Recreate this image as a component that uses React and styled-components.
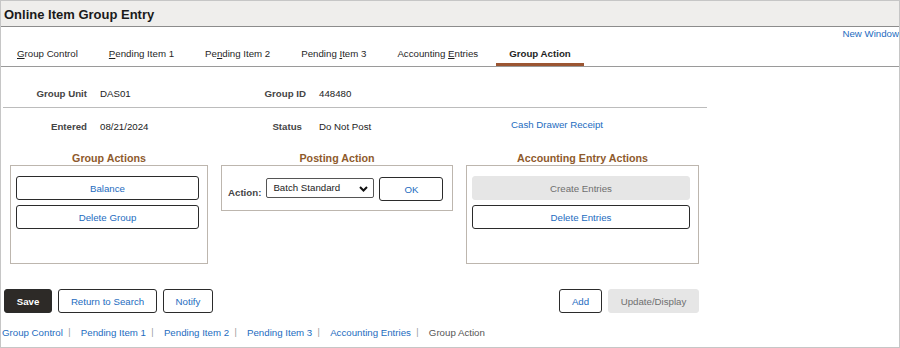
import React from 'react';
import styled, { createGlobalStyle } from 'styled-components';

const GlobalStyle = createGlobalStyle`
  html, body {
    margin: 0;
    padding: 0;
    background: #fff;
  }
  body {
    font-family: "Liberation Sans", Arial, sans-serif;
    font-size: 9.7px;
    color: #222;
  }
`;

const LINK = '#1d6cc0';
const BROWN = '#8e5a2c';
const FS = '9.7px';

const Page = styled.div`
  width: 900px;
  height: 348px;
  box-sizing: border-box;
  border: 1px solid #c6c6c6;
  overflow: hidden;
  display: flex;
  flex-direction: column;
`;

const Header = styled.div`
  height: 25px;
  background: #efeeec;
  border-bottom: 1px solid #8c8c8c;
  display: flex;
  align-items: center;
  padding-left: 3px;
`;

const Title = styled.h1`
  margin: 0;
  font-size: 13px;
  font-weight: bold;
  color: #1a1a1a;
  padding-top: 1px;
`;

const TopLinkRow = styled.div`
  height: 13px;
  display: flex;
  justify-content: flex-end;
  align-items: center;
`;

const Link = styled.a`
  color: ${LINK};
  font-size: ${FS};
  text-decoration: none;
  cursor: pointer;
  white-space: nowrap;
`;

const TabBar = styled.div`
  height: 26px;
  display: flex;
  gap: 5px;
  padding-left: 3px;
  border-bottom: 1px solid #9a9a9a;
`;

const Tab = styled.div`
  height: 26px;
  box-sizing: border-box;
  display: flex;
  align-items: center;
  padding: 3px 13px 0;
  border-bottom: 3px solid ${({ $active }) => ($active ? '#9b5532' : 'transparent')};
  font-size: ${FS};
  font-weight: ${({ $active }) => ($active ? 'bold' : 'normal')};
  color: #1f1f1f;
  white-space: pre;

  u {
    text-decoration: underline;
    text-underline-offset: 1px;
  }
`;

const FieldSection = styled.div`
  width: 704px;
  margin-left: 2px;
`;

const FieldRow = styled.div`
  display: flex;
  align-items: center;
  height: ${({ $h }) => $h}px;
  margin-top: ${({ $mt }) => $mt || 0}px;
  border-bottom: ${({ $divider }) => ($divider ? '1px solid #bcbcbc' : 'none')};
  padding-bottom: ${({ $divider }) => ($divider ? 4 : 0)}px;
`;

const Label = styled.div`
  width: ${({ $w }) => $w}px;
  text-align: right;
  font-weight: bold;
  color: #454545;
  padding-right: ${({ $pr }) => $pr || 0}px;
  box-sizing: border-box;
`;

const Value = styled.div`
  width: ${({ $w }) => $w}px;
  padding-left: 13px;
  box-sizing: border-box;
  color: #222;
`;

const ActionLink = styled(Link)`
  margin-bottom: 4px;
`;

const Panels = styled.div`
  display: flex;
  gap: 13px;
  padding-left: 9px;
  margin-top: 7px;
  align-items: flex-start;
`;

const Panel = styled.div`
  width: ${({ $w }) => $w}px;
  display: flex;
  flex-direction: column;
`;

const PanelTitle = styled.div`
  height: 14px;
  line-height: 14px;
  text-align: center;
  font-size: 10.7px;
  font-weight: bold;
  color: ${BROWN};
`;

const PanelBox = styled.div`
  border: 1px solid #bdb6ae;
  height: ${({ $h }) => $h}px;
  box-sizing: border-box;
  padding: 10px 8px 0 5px;
  display: flex;
  flex-direction: column;
  gap: 5px;
`;

const PostingBox = styled.div`
  border: 1px solid #bdb6ae;
  height: 46px;
  box-sizing: border-box;
  padding: 0 8px 0 6px;
  display: flex;
  align-items: center;
`;

const Button = styled.button`
  height: 24px;
  box-sizing: border-box;
  border: ${({ $variant }) => ($variant === 'disabled' ? '1px solid #e6e6e6' : '1px solid #2b2b2b')};
  border-radius: 3px;
  background: ${({ $variant }) =>
    $variant === 'primary' ? '#2d2a27' : $variant === 'disabled' ? '#e6e6e6' : '#fff'};
  color: ${({ $variant }) =>
    $variant === 'primary' ? '#fff' : $variant === 'disabled' ? '#6f6f6f' : LINK};
  font-family: "Liberation Sans", Arial, sans-serif;
  font-size: ${FS};
  font-weight: ${({ $variant }) => ($variant === 'primary' ? 'bold' : 'normal')};
  padding: 0 11px;
  width: ${({ $w }) => ($w ? `${$w}px` : 'auto')};
  cursor: pointer;
  white-space: nowrap;
`;

const OkButton = styled(Button)`
  margin-left: 5px;
  margin-top: 2px;
`;

const ActionLabel = styled.span`
  font-size: ${FS};
  font-weight: bold;
  color: #454545;
  margin-top: 9px;
  margin-right: 5px;
  white-space: nowrap;
`;

const Select = styled.div`
  width: 108px;
  height: 20px;
  flex-shrink: 0;
  box-sizing: border-box;
  border: 1px solid #555;
  border-radius: 2px;
  display: flex;
  align-items: center;
  justify-content: space-between;
  padding: 0 5px 2px 6px;
  color: #222;
  font-size: ${FS};
`;

const Chevron = styled.svg`
  width: 9px;
  height: 6px;
  margin-top: 3px;
`;

const BottomBar = styled.div`
  width: 695px;
  margin-left: 3px;
  margin-top: 25px;
  display: flex;
  justify-content: space-between;
`;

const ButtonGroup = styled.div`
  display: flex;
  gap: 6px;
`;

const Breadcrumbs = styled.div`
  display: flex;
  align-items: center;
  margin-top: 12px;
  margin-left: 1px;
  height: 14px;
  white-space: nowrap;
`;

const Crumb = styled.span`
  color: ${({ $current }) => ($current ? '#555' : LINK)};
  font-size: ${FS};
`;

const Sep = styled.span`
  color: #9a9a9a;
  font-size: 9px;
  margin: 0 10.3px 0 5.3px;
`;

const tabs = [
  { key: 'gc', label: <span><u>G</u>roup Control</span> },
  { key: 'p1', label: <span><u>P</u>ending Item 1</span> },
  { key: 'p2', label: <span>Pe<u>n</u>ding Item 2</span> },
  { key: 'p3', label: <span>Pending <u>I</u>tem 3</span> },
  { key: 'ae', label: <span>Accounting <u>E</u>ntries</span> },
  { key: 'ga', label: <span>Group Action</span>, active: true },
];

const crumbs = ['Group Control', 'Pending Item 1', 'Pending Item 2', 'Pending Item 3', 'Accounting Entries'];

export default function App() {
  return (
    <>
      <GlobalStyle />
      <Page>
        <Header>
          <Title>Online Item Group Entry</Title>
        </Header>
        <TopLinkRow>
          <Link>New Window</Link>
        </TopLinkRow>
        <TabBar>
          {tabs.map((t) => (
            <Tab key={t.key} $active={t.active}>{t.label}</Tab>
          ))}
        </TabBar>

        <FieldSection>
          <FieldRow $h={20} $mt={16} $divider>
            <Label $w={84}>Group Unit</Label>
            <Value $w={134}>DAS01</Value>
            <Label $w={85}>Group ID</Label>
            <Value $w={205}>448480</Value>
          </FieldRow>
          <FieldRow $h={36}>
            <Label $w={84}>Entered</Label>
            <Value $w={134}>08/21/2024</Value>
            <Label $w={85} $pr={4}>Status</Label>
            <Value $w={205}>Do Not Post</Value>
            <ActionLink>Cash Drawer Receipt</ActionLink>
          </FieldRow>
        </FieldSection>

        <Panels>
          <Panel $w={198}>
            <PanelTitle>Group Actions</PanelTitle>
            <PanelBox $h={99}>
              <Button>Balance</Button>
              <Button>Delete Group</Button>
            </PanelBox>
          </Panel>
          <Panel $w={232}>
            <PanelTitle>Posting Action</PanelTitle>
            <PostingBox>
              <ActionLabel>Action:</ActionLabel>
              <Select>
                <span>Batch Standard</span>
                <Chevron viewBox="0 0 9 6">
                  <path d="M1 1 L4.5 4.5 L8 1" fill="none" stroke="#111" strokeWidth="2" />
                </Chevron>
              </Select>
              <OkButton $w={64}>OK</OkButton>
            </PostingBox>
          </Panel>
          <Panel $w={233}>
            <PanelTitle>Accounting Entry Actions</PanelTitle>
            <PanelBox $h={99}>
              <Button $variant="disabled">Create Entries</Button>
              <Button>Delete Entries</Button>
            </PanelBox>
          </Panel>
        </Panels>

        <BottomBar>
          <ButtonGroup>
            <Button $variant="primary" $w={48}>Save</Button>
            <Button $w={99}>Return to Search</Button>
            <Button $w={50}>Notify</Button>
          </ButtonGroup>
          <ButtonGroup>
            <Button $w={43}>Add</Button>
            <Button $variant="disabled" $w={91}>Update/Display</Button>
          </ButtonGroup>
        </BottomBar>

        <Breadcrumbs>
          {crumbs.map((c) => (
            <React.Fragment key={c}>
              <Crumb>{c}</Crumb>
              <Sep>|</Sep>
            </React.Fragment>
          ))}
          <Crumb $current>Group Action</Crumb>
        </Breadcrumbs>
      </Page>
    </>
  );
}
